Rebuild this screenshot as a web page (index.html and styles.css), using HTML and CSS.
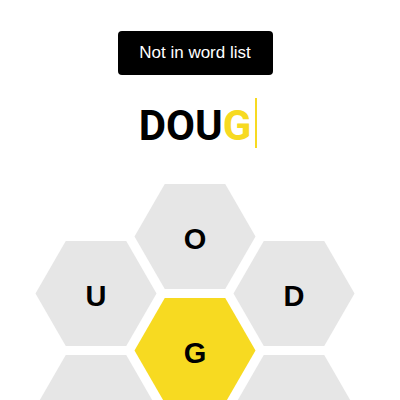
FILE: index.html
```html
<!DOCTYPE html>
<html>
<head>
<meta charset="utf-8">
<link rel="stylesheet" href="styles.css">
</head>
<body>
<div class="app">
  <div class="toast">Not in word list</div>
  <div class="input-row">
    <span class="word">DOU<span class="center-letter">G</span></span>
    <span class="cursor"></span>
  </div>
  <svg class="hive" width="390" height="240" viewBox="0 160 390 240">
    <g class="cell outer">
      <polygon points="134.5,236.5 164.75,184.1 225.25,184.1 255.5,236.5 225.25,288.9 164.75,288.9"/>
      <text x="195" y="248.5">O</text>
    </g>
    <g class="cell outer">
      <polygon points="35.5,293.5 65.75,241.1 126.25,241.1 156.5,293.5 126.25,345.9 65.75,345.9"/>
      <text x="96" y="305.5">U</text>
    </g>
    <g class="cell outer">
      <polygon points="233.5,293.5 263.75,241.1 324.25,241.1 354.5,293.5 324.25,345.9 263.75,345.9"/>
      <text x="294" y="305.5">D</text>
    </g>
    <g class="cell outer">
      <polygon points="35.5,407.5 65.75,355.1 126.25,355.1 156.5,407.5 126.25,459.9 65.75,459.9"/>
      <text x="96" y="419.5">T</text>
    </g>
    <g class="cell outer">
      <polygon points="233.5,407.5 263.75,355.1 324.25,355.1 354.5,407.5 324.25,459.9 263.75,459.9"/>
      <text x="294" y="419.5">N</text>
    </g>
    <g class="cell center">
      <polygon points="134.5,350.5 164.75,298.1 225.25,298.1 255.5,350.5 225.25,402.9 164.75,402.9"/>
      <text x="195" y="362.5">G</text>
    </g>
  </svg>
</div>
</body>
</html>
```

FILE: styles.css
```css
html, body {
  margin: 0;
  padding: 0;
  background: #ffffff;
}

.app {
  width: 390px;
  display: flex;
  flex-direction: column;
  align-items: center;
}

.toast {
  margin-top: 31px;
  width: 155px;
  height: 44px;
  background: #000000;
  color: #ffffff;
  border-radius: 4px;
  display: flex;
  align-items: center;
  justify-content: center;
  font-family: "Liberation Sans", Arial, sans-serif;
  font-size: 17px;
}

.input-row {
  margin-top: 26px;
  display: flex;
  align-items: flex-start;
  height: 50px;
  padding-left: 6px;
}

.word {
  font-family: Roboto, "Liberation Sans", sans-serif;
  font-weight: 700;
  font-size: 42px;
  line-height: 50px;
  color: #000000;
}

.center-letter {
  color: #f7da21;
}

.cursor {
  width: 2px;
  height: 50px;
  margin-top: -3px;
  margin-left: 4px;
  background: #f7da21;
}

.hive {
  margin-top: 9px;
  display: block;
}

.cell polygon {
  fill: #e6e6e6;
}

.cell.center polygon {
  fill: #f7da21;
}

.cell text {
  font-family: "Liberation Sans", Arial, sans-serif;
  font-weight: 700;
  font-size: 29px;
  fill: #000000;
  text-anchor: middle;
}
```
